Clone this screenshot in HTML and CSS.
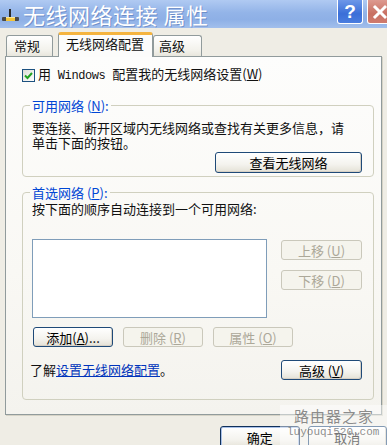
FILE: index.html
```html
<!DOCTYPE html>
<html lang="zh-CN">
<head>
<meta charset="utf-8">
<title>无线网络连接 属性</title>
<link rel="stylesheet" href="styles.css">
</head>
<body>
<div class="window">
  <div class="titlebar">
    <svg class="app-icon" width="17" height="16" viewBox="0 0 17 16">
      <rect x="7" y="2" width="2" height="9" fill="#2a2a2a"/>
      <rect x="0" y="10" width="17" height="4" rx="1" fill="#4a4a4a"/>
      <rect x="4" y="10" width="9" height="4" fill="#f2c43a"/>
      <rect x="4" y="10" width="9" height="1" fill="#fbe79a"/>
    </svg>
    <span class="title">无线网络连接 属性</span>
    <div class="caption-buttons">
      <span class="cap help">?</span>
      <span class="cap close">
        <svg width="16" height="16" viewBox="0 0 16 16"><path d="M3 3 L13 13 M13 3 L3 13" stroke="#fff" stroke-width="3" stroke-linecap="square"/></svg>
      </span>
    </div>
  </div>

  <div class="tabs">
    <div class="tab tab-general">常规</div>
    <div class="tab tab-active">无线网络配置</div>
    <div class="tab tab-adv">高级</div>
  </div>

  <div class="panel">
    <div class="check-row">
      <span class="checkbox">
        <svg width="11" height="11" viewBox="0 0 11 11"><path d="M2 5.5 L4.5 8 L9 3" fill="none" stroke="#21a121" stroke-width="2"/></svg>
      </span>
      <span>用<span class="mono"> Windows </span>配置我的无线网络设置(<u>W</u>)</span>
    </div>

    <fieldset class="group group-avail">
      <legend>可用网络 (<u>N</u>):</legend>
      <p class="desc">要连接、断开区域内无线网络或查找有关更多信息，请<br>单击下面的按钮。</p>
      <div class="row-end">
        <button class="btn btn-view">查看无线网络</button>
      </div>
    </fieldset>

    <fieldset class="group group-pref">
      <legend>首选网络 (<u>P</u>):</legend>
      <p class="desc">按下面的顺序自动连接到一个可用网络:</p>
      <div class="list-row">
        <div class="listbox"></div>
        <div class="move-col">
          <button class="btn btn-side" disabled>上移 (<u>U</u>)</button>
          <button class="btn btn-side" disabled>下移 (<u>D</u>)</button>
        </div>
      </div>
      <div class="action-row">
        <button class="btn btn-act">添加(<u>A</u>)...</button>
        <button class="btn btn-act" disabled>删除 (<u>R</u>)</button>
        <button class="btn btn-act" disabled>属性 (<u>O</u>)</button>
      </div>
      <div class="learn-row">
        <span class="learn">了解<a class="link">设置无线网络配置</a>。</span>
        <button class="btn btn-side">高级 (<u>V</u>)</button>
      </div>
    </fieldset>
  </div>

  <div class="footer">
    <button class="btn btn-foot btn-default">确定</button>
    <button class="btn btn-foot">取消</button>
  </div>

  <div class="watermark">
    <div class="wm-cn">路由器之家</div>
    <div class="wm-en">luyouqi520.com</div>
  </div>
</div>
</body>
</html>
```

FILE: styles.css
```css
* { box-sizing: border-box; }
html, body { margin: 0; padding: 0; }
body {
  width: 387px;
  height: 445px;
  overflow: hidden;
  background: #efede5;
  font-family: "Noto Sans CJK SC", "Liberation Sans", sans-serif;
  font-size: 13px;
  line-height: 15px;
  color: #111;
}
.window { position: relative; width: 387px; height: 445px; }

/* title bar */
.titlebar {
  height: 28px;
  display: flex;
  align-items: center;
  padding-left: 2px;
  background: linear-gradient(#b0caf2, #93b4e8 45%, #8eb0e6 70%, #a2bfec);
}
.app-icon { margin-top: 2px; flex: none; }
.title {
  margin-left: 4px;
  color: #fff;
  font-size: 22px;
  line-height: 28px;
  height: 28px;
  white-space: nowrap;
  letter-spacing: 0.5px;
  text-shadow: 1px 1px 0 rgba(40, 70, 140, 0.35);
}
.caption-buttons {
  margin-left: auto;
  margin-right: -6px;
  align-self: flex-start;
  display: flex;
  gap: 4px;
}
.cap {
  width: 26px;
  height: 24px;
  border: 1px solid #fff;
  border-top: 0;
  border-radius: 0 0 3px 3px;
  display: flex;
  align-items: center;
  justify-content: center;
}
.help {
  background: linear-gradient(#6d97e8, #3b6fd8 60%, #4a7ddf);
  color: #fff;
  font-family: "Liberation Sans", sans-serif;
  font-weight: bold;
  font-size: 19px;
}
.close { background: linear-gradient(#dd9a90, #c87062 60%, #cf7b6e); }

/* tabs */
.tabs {
  height: 28px;
  display: flex;
  align-items: flex-end;
  padding-left: 6px;
}
.tab {
  height: 21px;
  border: 1px solid #919b9c;
  border-bottom: 0;
  border-radius: 3px 3px 0 0;
  background: linear-gradient(#fff, #f3f2ec 70%, #e8e6dd);
  padding: 2px 0 0 7px;
  line-height: 16px;
}
.tab-general { width: 47px; margin-right: 5px; }
.tab-active {
  width: 95px;
  height: 25px;
  background: #fcfcfb;
  border-top: 3px solid #f5b43f;
  padding-top: 1px;
  padding-left: 7px;
  position: relative;
  z-index: 1;
  margin-bottom: -1px;
}
.tab-adv { width: 49px; padding-left: 5px; }

/* panel */
.panel {
  width: 377px;
  height: 359px;
  margin-left: 5px;
  border: 1px solid #919b9c;
  background: linear-gradient(#fdfdfc, #f9f8f4 60%, #f4f3ee);
  box-shadow: 1px 1px 0 #d6d3c6;
  padding: 8px 0 0 16px;
}
.check-row {
  height: 20px;
  display: flex;
  align-items: center;
  gap: 3px;
}
.checkbox {
  width: 13px;
  height: 13px;
  border: 1px solid #1c5180;
  background: linear-gradient(135deg, #dcdcd7, #fff);
  display: flex;
  align-items: center;
  justify-content: center;
}
.mono {
  font-family: "Liberation Mono", monospace;
  font-size: 12px;
  letter-spacing: -0.4px;
  white-space: pre;
}

/* group boxes */
.group {
  width: 352px;
  margin: 13px 0 0 0;
  border: 1px solid #d0d0bf;
  border-radius: 4px;
  padding: 7px 11px 3px 9px;
}
.group legend {
  padding: 0 2px;
  margin-left: -2px;
  color: #0046d5;
  line-height: 15px;
}
.group-pref { margin-top: 8px; padding: 1px 11px 19px 9px; }
.desc { margin: 0; }
.row-end { display: flex; justify-content: flex-end; margin-top: 2px; }

/* buttons */
.btn {
  font: inherit;
  line-height: 15px;
  height: 20px;
  padding: 0;
  border: 1px solid #1f4a78;
  border-radius: 3px;
  color: #000;
  background: linear-gradient(#ffffff, #f4f3ee 60%, #e4e1d6);
  box-shadow: inset -1px -1px 0 #d6d0c5;
}
.btn:disabled {
  border-color: #cac8bb;
  color: #aca899;
  background: #f5f4ed;
  box-shadow: none;
}
.btn-view { width: 147px; height: 21px; }
.list-row { display: flex; margin-top: 23px; }
.listbox {
  width: 235px;
  height: 79px;
  border: 1px solid #7f9db9;
  background: #fff;
}
.move-col {
  margin-left: 14px;
  margin-top: 1px;
  display: flex;
  flex-direction: column;
  gap: 10px;
}
.btn-side { width: 81px; }
.action-row {
  display: flex;
  gap: 10px;
  margin-top: 9px;
  margin-left: 1px;
}
.btn-act { width: 80px; }
.learn-row {
  margin-top: 13px;
  display: flex;
  align-items: center;
  justify-content: space-between;
}
.learn { margin-left: -2px; margin-top: -2px; }
.link { color: #0033bb; text-decoration: underline; }

/* footer */
.footer {
  display: flex;
  gap: 8px;
  padding-left: 220px;
  margin-top: 11px;
}
.btn-foot { width: 80px; height: 23px; }
.btn-default { border-color: #10305a; box-shadow: inset 0 0 0 1px #a8c0e8; }

/* watermark overlay */
.watermark {
  position: absolute;
  left: 280px;
  top: 405px;
  width: 107px;
  height: 40px;
  background: rgba(255, 255, 255, 0.45);
  color: rgba(120, 120, 120, 0.85);
  padding: 2px 0 0 14px;
}
.wm-cn { font-size: 15px; line-height: 18px; letter-spacing: 1px; }
.wm-en {
  font-family: "Liberation Mono", monospace;
  font-size: 11px;
  line-height: 14px;
  margin-left: -7px;
}
```
